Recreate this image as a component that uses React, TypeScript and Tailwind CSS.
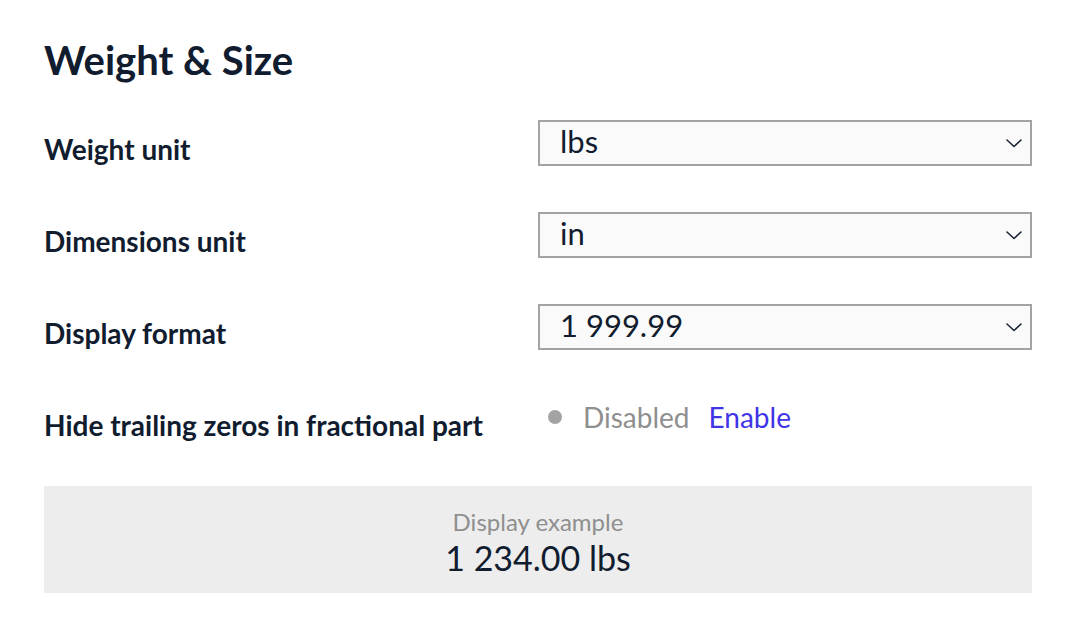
import React, { useState } from 'react';

const Chevron = () => (
  <svg width="16" height="9" viewBox="0 0 16 9" fill="none" className="shrink-0">
    <path d="M1 1l7 6.5L15 1" stroke="#1a2436" strokeWidth="1.6" strokeLinecap="round" strokeLinejoin="round" />
  </svg>
);

const Select = ({ value }: { value: string }) => (
  <div className="flex h-[46px] w-full items-center justify-between border-2 border-[#a3a3a3] bg-[#fafafa] pl-5 pr-[8px] text-[31px] leading-none text-[#111c2f]">
    <span className="-mt-[3px]">{value}</span>
    <Chevron />
  </div>
);

const Row = ({ label, children }: { label: string; children: React.ReactNode }) => (
  <div className="grid grid-cols-2">
    <div className="pt-[14px] text-[28px] font-bold leading-[30px] text-[#111c2f]">{label}</div>
    <div>{children}</div>
  </div>
);

export default function App() {
  const [enabled, setEnabled] = useState(false);

  return (
    <div className="min-h-screen bg-white px-11 pt-[36px] font-['Lato',sans-serif]">
      <div className="w-[988px]">
        <h1 className="text-[40px] font-bold leading-[48px] text-[#111c2f]">Weight &amp; Size</h1>

        <div className="mt-[36px] flex flex-col gap-[46px]">
          <Row label="Weight unit">
            <Select value="lbs" />
          </Row>
          <Row label="Dimensions unit">
            <Select value="in" />
          </Row>
          <Row label="Display format">
            <Select value="1 999.99" />
          </Row>
          <Row label="Hide trailing zeros in fractional part">
            <div className="flex items-center pl-[10px] pt-[6px] text-[28px] leading-[30px]">
              <span className={`mr-[21px] h-[14px] w-[14px] rounded-full ${enabled ? 'bg-[#22a559]' : 'bg-[#a3a3a3]'}`} />
              <span className="text-[#8f8f8f]">{enabled ? 'Enabled' : 'Disabled'}</span>
              <button
                onClick={() => setEnabled(!enabled)}
                className="ml-[19px] text-[#3f34e6]"
              >
                {enabled ? 'Disable' : 'Enable'}
              </button>
            </div>
          </Row>
        </div>

        <div className="mt-[46px] flex h-[107px] flex-col items-center justify-center bg-[#ededed] pt-[6px]">
          <div className="text-[24px] leading-[28px] text-[#8f8f8f]">Display example</div>
          <div className="mt-[2px] text-[34px] leading-[40px] text-[#111c2f]">1 234.00 lbs</div>
        </div>
      </div>
    </div>
  );
}
